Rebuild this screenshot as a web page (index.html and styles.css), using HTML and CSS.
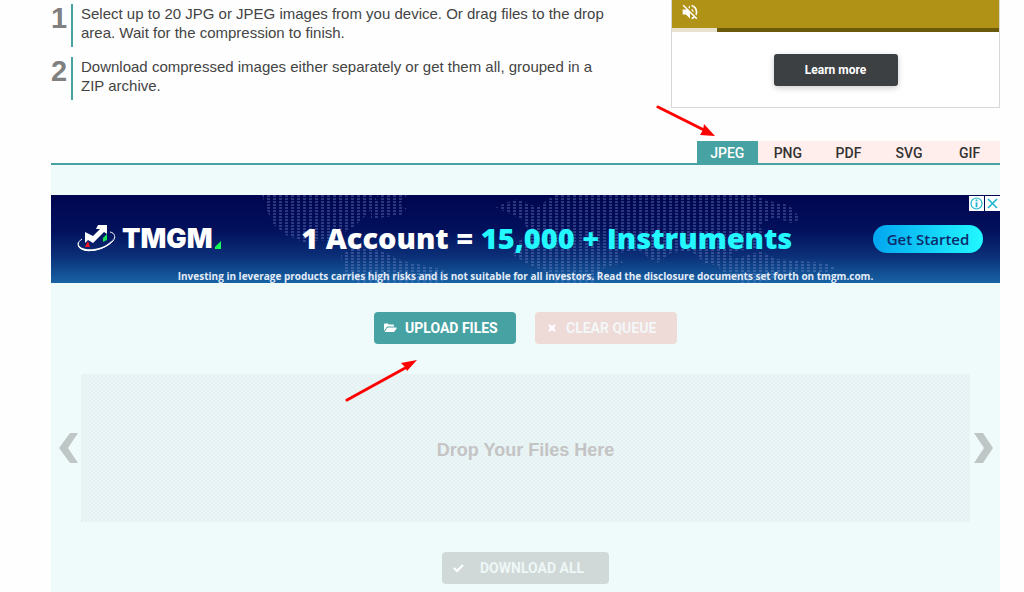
FILE: index.html
```
<!DOCTYPE html>
<html lang="en">
<head>
    <meta charset="UTF-8">
    <meta name="viewport" content="width=device-width, initial-scale=1.0">
    <title>Compress JPEG</title>
    <link rel="stylesheet" href="styles.css">
</head>
<body>
    <div id="page">
        <div class="top">
            <ol class="steps">
                <li><span class="num">1</span><p>Select up to 20 JPG or JPEG images from you device. Or drag files to the drop area. Wait for the compression to finish.</p></li>
                <li><span class="num">2</span><p>Download compressed images either separately or get them all, grouped in a ZIP archive.</p></li>
            </ol>
            <div class="video-ad">
                <div class="video">
                    <button type="button" class="mute" aria-label="Unmute">
                        <svg width="20" height="18" viewBox="1 1 22 22" fill="#fff"><path d="M16.5 12A4.5 4.5 0 0 0 14 7.97v2.21l2.45 2.45c.03-.2.05-.41.05-.63zm2.5 0c0 .94-.2 1.82-.54 2.64l1.51 1.51A8.8 8.8 0 0 0 21 12c0-4.28-2.99-7.86-7-8.77v2.06c2.89.86 5 3.54 5 6.71zM4.27 3 3 4.27 7.73 9H3v6h4l5 5v-6.73l4.25 4.25c-.67.52-1.42.93-2.25 1.18v2.06a9 9 0 0 0 3.69-1.81L19.73 21 21 19.73l-9-9L4.27 3zM12 4 9.91 6.09 12 8.18V4z"/></svg>
                    </button>
                </div>
                <div class="progress"><div class="played"></div></div>
                <div class="video-cta"><button type="button">Learn more</button></div>
            </div>
        </div>

        <nav class="tabs">
            <a href="#" class="active">JPEG</a>
            <a href="#">PNG</a>
            <a href="#">PDF</a>
            <a href="#">SVG</a>
            <a href="#">GIF</a>
        </nav>

        <div class="panel">
            <div class="banner">
                <!-- dotted world map -->
                <svg class="map" viewBox="0 0 949 88" preserveAspectRatio="none">
                    <defs>
                        <pattern id="dots" width="6" height="3" patternUnits="userSpaceOnUse"><rect width="3" height="2" fill="#8fa0e0"/></pattern>
                    </defs>
                    <g fill="url(#dots)" opacity=".3">
                        <path d="M211 0h112l4 8-12 12-10 10-12 8-4 10-20-3-14 3-20-8-12-10-6-12z"/>
                        <path d="M326 0h30l-8 10-18 5z"/>
                        <path d="M290 60l14-8 28 4 20 10 38 8 8 4-8 10h-86l-12-12z"/>
                        <path d="M320 6l20-4 16 12-6 6-30 4z"/>
                        <path d="M444 12l22-8 20 8 18-12h200l14 6 20 4 12 14-10 4-16-6-16 8 8 14-12 10-20 2-20 14-10-2-14-12-20 2-14 10-18-12-22 2 6 10-18 4-12 16-8 8h-26l-8-18-22-8-16-10 6-14 10-10-8-12z"/>
                        <path d="M654 50l16 4 14 10 26-8 16 8 48 4 12 6-14 4-30-2-14 6-20 6h-18l-20-12z"/>
                    </g>
                </svg>
                <div class="logo">
                    <svg width="40" height="30" viewBox="0 0 40 30">
                        <path d="M5 15C0 18 0 23 5 25c8 4 24 0 31-8 3-4 2-8-3-9" fill="none" stroke="#fff" stroke-width="1"/>
                        <path d="M1 18c-2 6 5 10 14 9 10-1 19-6 22-13-4 6-12 10-20 11C8 26 1 24 1 18z" fill="#fff"/>
                        <path d="M8 23l3-6 2 6z" fill="#ff1520"/>
                        <path d="M26 18v-4l4-4v6z" fill="#19e65a"/>
                        <path d="M8 19V8l8 4 7-7h-4l2-4h9v9l-3-2-11 11-5-3z" fill="#fff"/>
                    </svg>
                    <span>TMGM</span>
                    <svg class="tick" width="6" height="8" viewBox="0 0 6 8"><path d="M6 0v8H0V6z" fill="#19ff5a"/></svg>
                </div>
                <div class="headline">1 Account = <span>15,000 + Instruments</span></div>
                <button type="button" class="start">Get Started</button>
                <div class="risk">Investing in leverage products carries high risks and is not suitable for all investors. Read the disclosure documents set forth on tmgm.com.</div>
                <div class="adchoices">
                    <button type="button" aria-label="Ad info"><svg width="15" height="15" viewBox="0 0 15 15" fill="none" stroke="#1cb5cf"><circle cx="7.500" cy="7.500" r="5.500" stroke-width="1.200"/><path d="M7.500 6.300v5M7.500 3.500v1.700" stroke-width="1.800"/></svg></button>
                    <button type="button" aria-label="Close ad"><svg width="15" height="15" viewBox="0 0 15 15" fill="none" stroke="#1cb5cf" stroke-width="1.600"><path d="M3 3l9 9M12 3l-9 9"/></svg></button>
                </div>
            </div>

            <div class="buttons">
                <button type="button" class="btn upload">
                    <svg width="13" height="10" viewBox="0 0 13 10"><path d="M0 8V1.500Q0 .5 1 .5h2.500q1 0 1 1H9q1 0 1 1v1H4Q3 3.500 2.300 4.400z" fill="#fff"/><path d="M.6 9 3 5.200Q3.500 4.500 4.300 4.500H12q1 0 .5.900L10.500 8.400Q10 9 9.200 9z" fill="#fff"/></svg>
                    <span>UPLOAD FILES</span>
                </button>
                <button type="button" class="btn clear">
                    <svg width="13" height="10" viewBox="0 0 13 10"><path d="M4 2l6 6M10 2L4 8" stroke="#fff" stroke-width="2.400"/></svg>
                    <span>CLEAR QUEUE</span>
                </button>
            </div>

            <div class="queue">
                <button type="button" class="arrow" aria-label="Previous"><svg width="20" height="30" viewBox="0 0 20 30"><path d="M11 0h8L9 15l10 15h-8L0 15z" fill="#bfc7c6"/></svg></button>
                <div class="drop">Drop Your Files Here</div>
                <button type="button" class="arrow" aria-label="Next"><svg width="20" height="30" viewBox="0 0 20 30"><path d="M0 0h9l10 15L9 30H0l10-15z" fill="#bfc7c6"/></svg></button>
            </div>

            <div class="buttons">
                <button type="button" class="btn download">
                    <svg width="13" height="10" viewBox="0 0 13 10"><path d="M2 5l3 3 6-6" fill="none" stroke="#fff" stroke-width="2.200"/></svg>
                    <span>DOWNLOAD ALL</span>
                </button>
            </div>
        </div>

        <!-- red pointer arrows -->
        <svg class="pointer to-tab" width="60" height="34" viewBox="0 0 60 34"><path d="M2 3l46 23" stroke="#f00" stroke-width="3" stroke-linecap="round"/><path d="M59 32l-15-1 3-5 1-6z" fill="#f00"/></svg>
        <svg class="pointer to-upload" width="74" height="44" viewBox="0 0 74 44"><path d="M2 42l60-33" stroke="#f00" stroke-width="3" stroke-linecap="round"/><path d="M72 2L62 13l-2-4-4-4z" fill="#f00"/></svg>
    </div>
</body>
</html>
```
FILE: styles.css
```
body {
    margin: 0;
    background-color: #fefefe;
    font-family: "Liberation Sans", Arial, sans-serif;
    color: #444;
}
button {
    border: none;
    padding: 0;
    cursor: pointer;
}
svg {
    display: block;
}
#page {
    position: relative;
    margin: 0 24px 0 51px;
}
.top {
    display: flex;
    justify-content: space-between;
    height: 108px;
}
.steps {
    list-style: none;
    margin: 0;
    padding: 4px 0 0;
    width: 566px;
}
.steps li {
    display: flex;
    margin-bottom: 10px;
}
.steps p {
    flex: 1;
    margin: 0;
    padding-left: 8px;
    height: 43px;
    border-left: 2px solid #47a3a3;
    font-size: 15px;
    line-height: 19px;
}
.num {
    width: 20px;
    font-size: 29px;
    line-height: 29px;
    font-weight: bold;
    color: #808080;
}
.video-ad {
    display: flex;
    flex-direction: column;
    width: 327px;
    border: 1px solid #d8d8d8;
    border-top: none;
    background-color: #fff;
}
.video {
    height: 28px;
    background-color: #b09316;
}
.mute {
    background: none;
    padding: 3px 8px;
}
.progress {
    height: 4px;
    background-color: #6b590c;
}
.played {
    width: 45px;
    height: 4px;
    background-color: #e8e3d0;
}
.video-cta {
    flex: 1;
    display: flex;
    align-items: center;
    justify-content: center;
}
.video-cta button {
    width: 124px;
    height: 32px;
    border-radius: 3px;
    background-color: #3c4043;
    color: #fff;
    font: bold 12px Roboto, sans-serif;
    box-shadow: 0 2px 6px rgba(0, 0, 0, .2);
}
.tabs {
    display: grid;
    grid-template-columns: repeat(5, 1fr);
    margin-top: 33px;
    padding-left: calc(100% - 303px);
    border-bottom: 2px solid #47a3a3;
}
.tabs a {
    height: 22px;
    background-color: #ffeeec;
    color: #333;
    font: 500 14px/24px Roboto, sans-serif;
    text-align: center;
    text-decoration: none;
}
.tabs .active {
    background-color: #47a3a3;
    color: #fff;
}
.panel {
    padding: 30px 0 8px;
    background-color: #effbfb;
}
.banner {
    position: relative;
    display: flex;
    align-items: center;
    justify-content: space-between;
    height: 88px;
    box-sizing: border-box;
    padding: 0 17px 0 26px;
    background: linear-gradient(#000650, #02105c 40%, #0b3078 70%, #1763a5);
    font-family: "Open Sans", sans-serif;
    overflow: hidden;
}
.map {
    position: absolute;
    inset: 0;
    width: 100%;
    height: 100%;
}
.logo, .headline, .start {
    position: relative;
}
.logo {
    display: flex;
    align-items: center;
    color: #fff;
    font: 900 27px/30px Inter, sans-serif;
}
.logo span {
    padding-left: 5px;
}
.tick {
    align-self: flex-end;
    margin: 0 0 5px 2px;
}
.headline {
    padding-bottom: 4px;
    color: #fff;
    font-size: 29px;
    font-weight: 800;
    white-space: nowrap;
}
.headline span {
    color: #24f8ff;
}
.start {
    width: 110px;
    height: 28px;
    border-radius: 14px;
    background: linear-gradient(90deg, #02a6f0, #22f8ff);
    color: #0b2a6c;
    font: 600 15px "Open Sans", sans-serif;
}
.risk {
    position: absolute;
    left: 0;
    right: 0;
    bottom: 0;
    color: #e4ecf8;
    font-size: 10px;
    font-weight: 700;
    line-height: 13px;
    text-align: center;
    white-space: nowrap;
}
.adchoices {
    position: absolute;
    top: 1px;
    right: 0;
    display: flex;
    gap: 1px;
}
.adchoices button {
    background-color: #fff;
}
.buttons {
    display: flex;
    justify-content: center;
    gap: 19px;
    margin-top: 29px;
}
.btn {
    display: flex;
    align-items: center;
    width: 142px;
    height: 32px;
    padding-left: 10px;
    border-radius: 4px;
    color: #fff;
    font: 700 14px Roboto, sans-serif;
}
.btn span {
    padding-left: 8px;
}
.upload {
    background-color: #47a3a3;
}
.clear {
    background-color: #eedad6;
    color: #f3f7f8;
}
.download {
    width: 167px;
    background-color: #d0d9d8;
    color: #eef7f7;
}
.download span {
    padding-left: 15px;
}
.queue {
    display: flex;
    align-items: center;
    margin: 30px 0;
}
.arrow {
    width: 30px;
    background: none;
}
.arrow svg {
    margin: 0 auto 0 8px;
}
.arrow:last-child svg {
    margin-left: 4px;
}
.drop {
    flex: 1;
    padding-top: 4px;
    background: repeating-conic-gradient(#e6f1f3 0 25%, #eaf5f6 0 50%) 0 0 / 4px 4px;
    color: #c4c4c4;
    font-size: 18px;
    font-weight: bold;
    line-height: 144px;
    text-align: center;
}
.pointer {
    position: absolute;
}
.to-tab {
    top: 104px;
    right: 284px;
}
.to-upload {
    top: 358px;
    left: 294px;
}
```
